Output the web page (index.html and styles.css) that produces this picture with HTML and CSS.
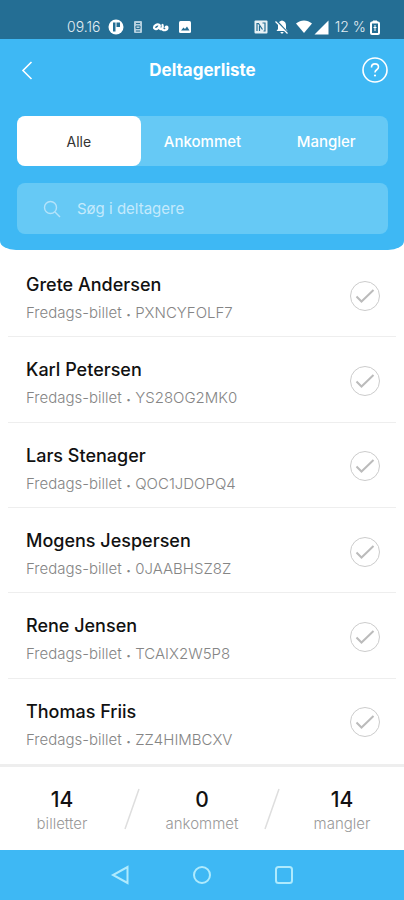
FILE: index.html
```html
<!DOCTYPE html>
<html lang="da">
<head>
<meta charset="utf-8">
<meta name="viewport" content="width=device-width, initial-scale=1">
<title>Deltagerliste</title>
<link rel="stylesheet" href="styles.css">
</head>
<body>
<div class="status">
  <div class="status-group">
    <span class="clock">09.16</span>
    <svg width="16" height="16" viewBox="0 0 16 16"><circle cx="8" cy="8" r="7.5" fill="#fff"/><path d="M5 3.500h2.500v9H5zM8.500 3.500h3.500v4.500H8.500z" fill="#246e94"/></svg>
    <svg width="12" height="14" viewBox="0 0 10 14"><rect x="1" y="1" width="8" height="12" rx="1" fill="#b5d0df"/><path d="M3 3.500h4M3 6h4v2.500H3zM3 11h4" fill="none" stroke="#246e94"/></svg>
    <svg width="18" height="14" viewBox="0 0 18 14"><path d="M7.500 5C5 3.500 2 5.500 2 7.500s4 3 6-2.500c-1 3 0 5 1.500 4s1.500-2.500 1-4M10.500 9.500c2 1.500 5 .5 5-1.500s-1.500-1.500-2-.5" fill="none" stroke="#fff" stroke-width="2.200" stroke-linecap="round"/></svg>
    <svg width="14" height="14" viewBox="0 0 14 14"><rect x="1" y="1" width="12" height="12" rx="1.500" fill="#fff"/><path d="M3 10.500l2.500-3 1.500 1.500 2-2.500 2.500 4z" fill="#246e94"/></svg>
  </div>
  <div class="status-group">
    <svg width="14" height="14" viewBox="0 0 14 14"><rect x=".5" y=".5" width="13" height="13" rx="1" fill="#e8f1f5"/><path d="M3 11V3.500h1.500l4 6M5.500 6v5M8.500 3H11v8H9.500" fill="none" stroke="#246e94" stroke-width="1.200"/></svg>
    <svg width="16" height="16" viewBox="0 0 16 16"><path d="M8 1.500c-3 .5-4 2.500-4 5V10l-1.500 2h11L12 10V6.500c0-2.500-1-4.500-4-5zM6.500 13h3c0 2-3 2-3 0z" fill="#fff"/><path d="M2.500 1.500l12 13" stroke="#246e94" stroke-width="1.500"/><path d="M1.500 2.500l12 12" stroke="#fff" stroke-width="1.200"/></svg>
    <span class="signal">
    <svg width="16" height="14" viewBox="0 0 16 14"><path d="M0 3.500C5-.5 11-.5 16 3.500L8 13z" fill="#fff"/></svg>
    <svg width="15" height="15" viewBox="0 0 15 15"><path d="M14.500.5v14H.5z" fill="#fff"/></svg>
    </span>
    <span class="battery">12 %
    <svg width="10" height="15" viewBox="0 0 10 15"><path d="M3 1h4v1H3z" fill="#fff" stroke="#fff"/><rect x="1" y="2.500" width="8" height="11.500" rx="1" fill="none" stroke="#fff" stroke-width="2"/><path d="M5 5v6M3.500 7.500h3" stroke="#fff"/></svg></span>
  </div>
</div>
<header class="header">
  <div class="bar">
    <button class="icon-button" aria-label="Tilbage"><svg width="26" height="26" viewBox="0 0 26 26"><path d="M14.500 5L6 13.500l8.500 8.500" fill="none" stroke="#fff" stroke-width="1.600"/></svg></button>
    <h1>Deltagerliste</h1>
    <button class="icon-button" aria-label="Hjælp"><svg width="26" height="26" viewBox="0 0 26 26"><circle cx="13" cy="13" r="12" fill="none" stroke="#fff" stroke-width="1.600"/><path d="M9.500 10.500c0-5 7-4.500 7-.5 0 3-3.500 2.500-3.500 5.500" fill="none" stroke="#fff" stroke-width="1.600"/><circle cx="13" cy="18.500" r="1.100" fill="#fff"/></svg></button>
  </div>
  <nav class="tabs">
    <button class="tab active">Alle</button>
    <button class="tab">Ankommet</button>
    <button class="tab">Mangler</button>
  </nav>
  <label class="search">
    <svg width="18" height="18" viewBox="0 0 18 18"><circle cx="7.500" cy="7.500" r="6" fill="none" stroke="#b4e3fa" stroke-width="1.400"/><path d="M12 12l5 5" stroke="#b4e3fa" stroke-width="1.400"/></svg>
    <input type="text" placeholder="Søg i deltagere" aria-label="Søg i deltagere">
  </label>
</header>
<main class="list">
  <article class="row"><div class="person"><h2>Grete Andersen</h2><p>Fredags-billet <span class="dot">•</span> PXNCYFOLF7</p></div><button class="check" aria-label="Marker Grete Andersen"><svg width="30" height="30" viewBox="0 0 30 30"><circle cx="15" cy="15" r="14.500"/><path d="M6.500 15.500l5 5 12-11.500"/></svg></button></article>
  <article class="row"><div class="person"><h2>Karl Petersen</h2><p>Fredags-billet <span class="dot">•</span> YS28OG2MK0</p></div><button class="check" aria-label="Marker Karl Petersen"><svg width="30" height="30" viewBox="0 0 30 30"><circle cx="15" cy="15" r="14.500"/><path d="M6.500 15.500l5 5 12-11.500"/></svg></button></article>
  <article class="row"><div class="person"><h2>Lars Stenager</h2><p>Fredags-billet <span class="dot">•</span> QOC1JDOPQ4</p></div><button class="check" aria-label="Marker Lars Stenager"><svg width="30" height="30" viewBox="0 0 30 30"><circle cx="15" cy="15" r="14.500"/><path d="M6.500 15.500l5 5 12-11.500"/></svg></button></article>
  <article class="row"><div class="person"><h2>Mogens Jespersen</h2><p>Fredags-billet <span class="dot">•</span> 0JAABHSZ8Z</p></div><button class="check" aria-label="Marker Mogens Jespersen"><svg width="30" height="30" viewBox="0 0 30 30"><circle cx="15" cy="15" r="14.500"/><path d="M6.500 15.500l5 5 12-11.500"/></svg></button></article>
  <article class="row"><div class="person"><h2>Rene Jensen</h2><p>Fredags-billet <span class="dot">•</span> TCAIX2W5P8</p></div><button class="check" aria-label="Marker Rene Jensen"><svg width="30" height="30" viewBox="0 0 30 30"><circle cx="15" cy="15" r="14.500"/><path d="M6.500 15.500l5 5 12-11.500"/></svg></button></article>
  <article class="row"><div class="person"><h2>Thomas Friis</h2><p>Fredags-billet <span class="dot">•</span> ZZ4HIMBCXV</p></div><button class="check" aria-label="Marker Thomas Friis"><svg width="30" height="30" viewBox="0 0 30 30"><circle cx="15" cy="15" r="14.500"/><path d="M6.500 15.500l5 5 12-11.500"/></svg></button></article>
</main>
<footer class="totals">
  <div class="total"><strong>14</strong><span>billetter</span></div>
  <svg width="16" height="42" viewBox="0 0 16 42"><path d="M15 1L1 41" stroke="#dedede" stroke-width="1.500"/></svg>
  <div class="total"><strong>0</strong><span>ankommet</span></div>
  <svg width="16" height="42" viewBox="0 0 16 42"><path d="M15 1L1 41" stroke="#dedede" stroke-width="1.500"/></svg>
  <div class="total"><strong>14</strong><span>mangler</span></div>
</footer>
<nav class="system">
  <button class="icon-button" aria-label="Tilbage"><svg width="20" height="20" viewBox="0 0 20 20"><path d="M17.500 2v16L3 10z"/></svg></button>
  <button class="icon-button" aria-label="Hjem"><svg width="20" height="20" viewBox="0 0 20 20"><circle cx="10" cy="10" r="8"/></svg></button>
  <button class="icon-button" aria-label="Seneste apps"><svg width="20" height="20" viewBox="0 0 20 20"><rect x="2" y="2" width="16" height="16" rx="2.500"/></svg></button>
</nav>
</body>
</html>
```
FILE: styles.css
```css
* {
  box-sizing: border-box;
}

body {
  margin: 0;
  min-height: 100vh;
  display: flex;
  flex-direction: column;
  background: #fff;
  color: #111;
  font-family: Inter, "Liberation Sans", sans-serif;
}

button {
  border: 0;
  padding: 0;
  background: none;
  font: inherit;
  color: inherit;
}

svg {
  display: block;
  flex: none;
}

h1, h2, p {
  margin: 0;
}

.status {
  display: flex;
  justify-content: space-between;
  padding: 15px 24px 0 67px;
  background: #246e94;
  color: #e2edf3;
  font-size: 14px;
  line-height: 24px;
}

.status-group {
  display: flex;
  align-items: center;
  gap: 8px;
}

.status-group:last-child {
  gap: 6px;
}

.clock {
  font-family: Inter, sans-serif;
  font-weight: 300;
}

.signal {
  display: flex;
  align-items: center;
  gap: 2px;
}

.battery {
  display: flex;
  align-items: center;
  gap: 4px;
  font-weight: 300;
}

.header {
  padding: 17px 16px 16px 17px;
  background: #3eb8f4;
  color: #fff;
  border-radius: 0 0 16px 16px / 0 0 9px 9px;
}

.bar {
  display: flex;
  align-items: center;
  justify-content: space-between;
  padding-bottom: 32px;
}

.icon-button {
  display: grid;
  place-items: center;
}

h1 {
  font-size: 17px;
  line-height: 28px;
  font-weight: 700;
}

.tabs {
  display: grid;
  grid-template-columns: repeat(3, 1fr);
  height: 50px;
  border-radius: 8px;
  background: #66c9f5;
}

.tab {
  border-radius: 8px;
  font-size: 15px;
  font-weight: 500;
}

.active {
  background: #fff;
  color: #333;
  font-size: 14px;
  font-weight: 400;
}

.search {
  display: flex;
  align-items: center;
  gap: 16px;
  height: 51px;
  margin-top: 17px;
  padding: 0 26px;
  border-radius: 8px;
  background: #66c9f5;
}

.search input {
  flex: 1;
  min-width: 0;
  border: 0;
  padding: 0;
  outline: 0;
  background: none;
  color: #fff;
  font: 15px Inter, "Liberation Sans", sans-serif;
}

.search input::placeholder {
  color: #c4eafc;
  opacity: 1;
}

.list {
  flex: 1;
  display: grid;
  grid-auto-rows: 1fr;
  padding: 2px 8px 0;
}

.row {
  display: flex;
  align-items: center;
  justify-content: space-between;
  padding: 3px 16px 0 18px;
  border-bottom: 1px solid #eee;
}

.row:last-child {
  border-bottom-color: transparent;
}

.person {
  padding-top: 7px;
}

.row h2 {
  font-size: 18px;
  line-height: 28px;
  font-weight: 500;
}

.row p {
  color: #858585;
  font-size: 15px;
  line-height: 28px;
  font-weight: 300;
}

.dot {
  font-size: 9px;
  line-height: 1;
}

.check svg {
  fill: none;
  stroke: #ccc;
}

.check path {
  stroke: #bbb;
  stroke-width: 2;
}

.totals {
  display: flex;
  align-items: center;
  justify-content: space-between;
  height: 86px;
  border-top: 3px solid #eee;
}

.total {
  flex: 1;
  display: grid;
  justify-items: center;
  padding-top: 3px;
}

.total strong {
  font-size: 21px;
  line-height: 28px;
  font-weight: 500;
}

.total span {
  color: #999;
  font-size: 15px;
  line-height: 20px;
  font-weight: 300;
}

.system {
  display: flex;
  justify-content: center;
  gap: 62px;
  height: 50px;
  background: #3eb8f4;
}

.system svg {
  fill: none;
  stroke: #aeeafd;
  stroke-width: 2;
}
```
